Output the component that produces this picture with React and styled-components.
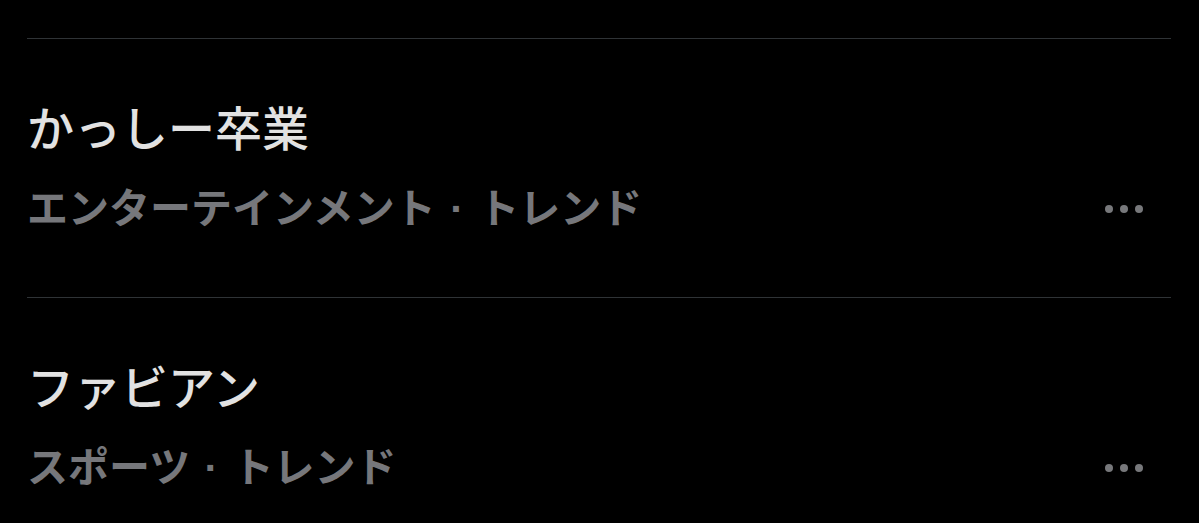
import React from 'react';
import styled, { createGlobalStyle } from 'styled-components';

const GlobalStyle = createGlobalStyle`
  html, body {
    margin: 0;
    padding: 0;
    background: #000;
  }
  body {
    font-family: "Noto Sans CJK JP", "Noto Sans", sans-serif;
    -webkit-font-smoothing: antialiased;
  }
`;

const List = styled.div`
  padding: 38px 28px 0 27px;
  background: #000;
  min-height: 100vh;
  box-sizing: border-box;
`;

const Divider = styled.div`
  height: 1px;
  background: #2f3336;
`;

const TrendRow = styled.div`
  padding: 57px 0 64px 0;
`;

const Title = styled.div`
  font-size: 47px;
  line-height: 60px;
  font-weight: 500;
  color: #e2e2e2;
`;

const MetaRow = styled.div`
  display: flex;
  align-items: center;
  justify-content: space-between;
  margin-top: 21px;
`;

const Meta = styled.div`
  font-size: 41px;
  line-height: 56px;
  height: 56px;
  font-weight: 700;
  color: #76777b;
`;

const Separator = styled.span`
  font-family: "Liberation Sans", Arial, sans-serif;
  font-weight: 700;
  line-height: 0;
  padding: 0 3px;
`;

const MoreButton = styled.button`
  display: flex;
  gap: 7px;
  margin-right: 28px;
  margin-top: 8px;
  padding: 0;
  border: 0;
  background: none;
`;

const Dot = styled.span`
  width: 8px;
  height: 8px;
  border-radius: 50%;
  background: #77787b;
`;

const trends = [
  { id: 1, title: 'かっしー卒業', category: 'エンターテインメント' },
  { id: 2, title: 'ファビアン', category: 'スポーツ' },
];

const App = () => (
  <>
    <GlobalStyle />
    <List>
      {trends.map((trend) => (
        <React.Fragment key={trend.id}>
          <Divider />
          <TrendRow>
            <Title>{trend.title}</Title>
            <MetaRow>
              <Meta>
                {trend.category}
                <Separator> · </Separator>
                トレンド
              </Meta>
              <MoreButton aria-label="その他">
                <Dot />
                <Dot />
                <Dot />
              </MoreButton>
            </MetaRow>
          </TrendRow>
        </React.Fragment>
      ))}
    </List>
  </>
);

export default App;
